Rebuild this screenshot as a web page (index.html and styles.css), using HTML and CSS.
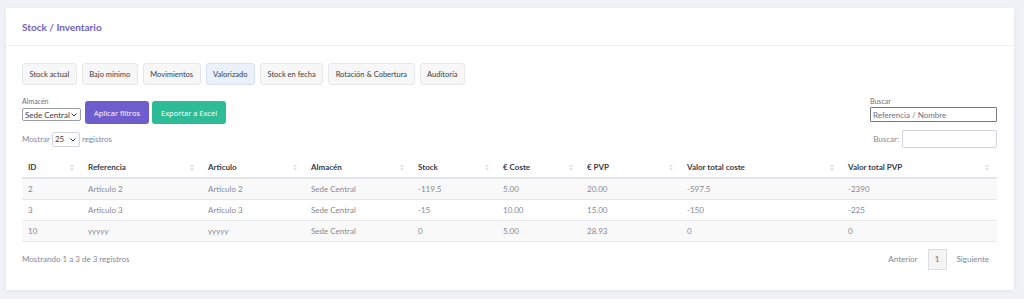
FILE: index.html
```html
<!DOCTYPE html>
<html lang="es">
<head>
  <meta charset="UTF-8">
  <meta name="viewport" content="width=device-width, initial-scale=1.0">
  <title>Stock / Inventario</title>
  <link rel="stylesheet" href="styles.css">
</head>
<body>
  <div class="card">
    <div class="card-header">
      <h3>Stock / Inventario</h3>
    </div>
    <div class="card-body">
      <!-- Tabs -->
      <div class="tabs">
        <button class="tab">Stock actual</button>
        <button class="tab">Bajo mínimo</button>
        <button class="tab">Movimientos</button>
        <button class="tab active">Valorizado</button>
        <button class="tab">Stock en fecha</button>
        <button class="tab">Rotación &amp; Cobertura</button>
        <button class="tab">Auditoría</button>
      </div>

      <!-- Filters -->
      <div class="filters">
        <div class="filter-left">
          <div class="field">
            <label>Almacén</label>
            <span class="select">
              <select class="sel"><option>Sede Central</option></select>
              <svg class="chev" width="6" height="4" viewBox="0 0 6 4"><path d="M0.5 0.5 L3 3 L5.5 0.5" fill="none" stroke="#3a3b45" stroke-width="1"/></svg>
            </span>
          </div>
          <button class="btn btn-primary">Aplicar filtros</button>
          <button class="btn btn-success">Exportar a Excel</button>
        </div>
        <div class="field search-field">
          <label>Buscar</label>
          <input class="search" type="text" placeholder="Referencia / Nombre">
        </div>
      </div>

      <!-- Table controls -->
      <div class="dt-top">
        <div class="length">Mostrar
          <span class="select">
            <select class="sel len"><option>25</option></select>
            <svg class="chev" width="6" height="4" viewBox="0 0 6 4"><path d="M0.5 0.5 L3 3 L5.5 0.5" fill="none" stroke="#3a3b45" stroke-width="1"/></svg>
          </span>
          registros</div>
        <div class="dt-search">Buscar: <input type="text"></div>
      </div>

      <table class="table">
        <thead>
          <tr>
            <th>ID</th>
            <th>Referencia</th>
            <th>Articulo</th>
            <th>Almacén</th>
            <th>Stock</th>
            <th>€ Coste</th>
            <th>€ PVP</th>
            <th>Valor total coste</th>
            <th>Valor total PVP</th>
          </tr>
        </thead>
        <tbody>
          <tr><td>2</td><td>Articulo 2</td><td>Articulo 2</td><td>Sede Central</td><td>-119.5</td><td>5.00</td><td>20.00</td><td>-597.5</td><td>-2390</td></tr>
          <tr><td>3</td><td>Articulo 3</td><td>Articulo 3</td><td>Sede Central</td><td>-15</td><td>10.00</td><td>15.00</td><td>-150</td><td>-225</td></tr>
          <tr><td>10</td><td>yyyyy</td><td>yyyyy</td><td>Sede Central</td><td>0</td><td>5.00</td><td>28.93</td><td>0</td><td>0</td></tr>
        </tbody>
      </table>

      <div class="dt-bottom">
        <div class="info">Mostrando 1 a 3 de 3 registros</div>
        <div class="paging">
          <span>Anterior</span>
          <span class="page">1</span>
          <span>Siguiente</span>
        </div>
      </div>
    </div>
  </div>
</body>
</html>
```

FILE: styles.css
```css
body {
  margin: 0;
  padding: 8px 10px 9px 6px;
  background-color: #f0f1f7;
  font-family: Lato, "Open Sans", Arial, sans-serif;
  font-size: 8px;
  color: #858796;
}

.card {
  background-color: #fff;
  box-shadow: 0 1px 4px rgba(58, 59, 69, 0.08);
}

.card-header {
  height: 37px;
  padding: 0 16px;
  display: flex;
  align-items: center;
  border-bottom: 1px solid #eef0f3;
}

.card-header h3 {
  margin: 0;
  font-size: 10px;
  font-weight: 700;
  color: #6f62c9;
}

.card-body {
  padding: 17px 17px 20px 16px;
}

/* Tabs */
.tabs {
  display: flex;
  gap: 5px;
}

.tab {
  font-family: Lato, "Open Sans", Arial, sans-serif;
  font-size: 7.5px;
  color: #3a3b45;
  background-color: #f7f7f8;
  border: 1px solid #e6e7ea;
  border-radius: 3px;
  height: 22px;
  padding: 0 6.5px;
}

.tab.active {
  background-color: #eaf1fb;
  border-color: #d6e2f3;
}

/* Filters */
.filters {
  display: flex;
  justify-content: space-between;
  align-items: flex-start;
  margin-top: 12px;
}

.filter-left {
  display: flex;
  align-items: flex-end;
  gap: 4px;
}

.field {
  display: flex;
  flex-direction: column;
  gap: 3px;
}

.field label {
  font-size: 7px;
  color: #6e707e;
}

.select {
  position: relative;
  display: inline-flex;
}

.chev {
  position: absolute;
  right: 4px;
  top: 5px;
  pointer-events: none;
}

.sel {
  appearance: none;
  font-family: Lato, "Open Sans", Arial, sans-serif;
  font-size: 8px;
  color: #3a3b45;
  width: 59px;
  height: 13px;
  padding: 0 2px;
  border: 1px solid #9a9ca6;
  border-radius: 2px;
  background-color: #fff;
}

.btn {
  font-family: "Open Sans", Arial, sans-serif;
  font-size: 7.5px;
  color: #fff;
  border: none;
  border-radius: 3px;
  height: 23px;
  padding: 0 9px;
  margin-bottom: -3px;
}

.btn-primary {
  background-color: #6e5dcd;
}

.btn-success {
  background-color: #2ebb98;
  margin-left: -1px;
}

.search-field {
  gap: 2px;
}

.search {
  width: 121px;
  height: 11px;
  font-family: Lato, "Open Sans", Arial, sans-serif;
  font-size: 8px;
  padding: 1px 2px;
  border: 1px solid #76787f;
  border-radius: 1px;
}

.search::placeholder {
  color: #6e707e;
}

/* Table controls */
.dt-top {
  display: flex;
  justify-content: space-between;
  align-items: center;
  margin-top: 8px;
}

.length {
  display: flex;
  align-items: center;
  gap: 2px;
}

.len {
  width: 28px;
  height: 15px;
  border-color: #d1d3e2;
}

.length .chev {
  top: 6px;
}

.dt-search {
  display: flex;
  align-items: center;
  gap: 3px;
}

.dt-search input {
  width: 89px;
  height: 14px;
  padding: 1px 2px;
  border: 1px solid #d1d3e2;
  border-radius: 2px;
}

/* Table */
.table {
  width: 100%;
  border-collapse: collapse;
  margin-top: 9px;
  table-layout: fixed;
}

.table th,
.table td {
  box-sizing: border-box;
  padding: 0 6px;
  text-align: left;
  white-space: nowrap;
}

.table th:nth-child(1) { width: 60px; }
.table th:nth-child(2) { width: 120px; }
.table th:nth-child(3) { width: 103px; }
.table th:nth-child(4) { width: 107px; }
.table th:nth-child(5) { width: 85px; }
.table th:nth-child(6) { width: 84px; }
.table th:nth-child(7) { width: 100px; }
.table th:nth-child(8) { width: 161px; }

.table th {
  position: relative;
  height: 21px;
  font-weight: 700;
  color: #3a3b45;
  border-bottom: 2px solid #e3e6ea;
}

/* sort arrows */
.table th::before,
.table th::after {
  content: "";
  position: absolute;
  right: 8px;
  border-left: 2px solid transparent;
  border-right: 2px solid transparent;
}

.table th::before {
  top: 7px;
  border-bottom: 3px solid #e3e4e8;
}

.table th::after {
  top: 11px;
  border-top: 3px solid #e3e4e8;
}

.table td {
  height: 21px;
  color: #858796;
  border-bottom: 1px solid #e8e9ec;
}

.table tbody tr:nth-child(odd) {
  background-color: #f9f9f9;
}

.dt-bottom {
  display: flex;
  justify-content: space-between;
  align-items: center;
  margin-top: 7px;
}

.paging {
  display: flex;
  align-items: center;
  gap: 10px;
  margin-right: 8px;
}

.page {
  width: 17px;
  height: 19px;
  display: flex;
  align-items: center;
  justify-content: center;
  border: 1px solid #dcdde2;
  background-color: #f5f5f6;
  color: #6e707e;
}
```
